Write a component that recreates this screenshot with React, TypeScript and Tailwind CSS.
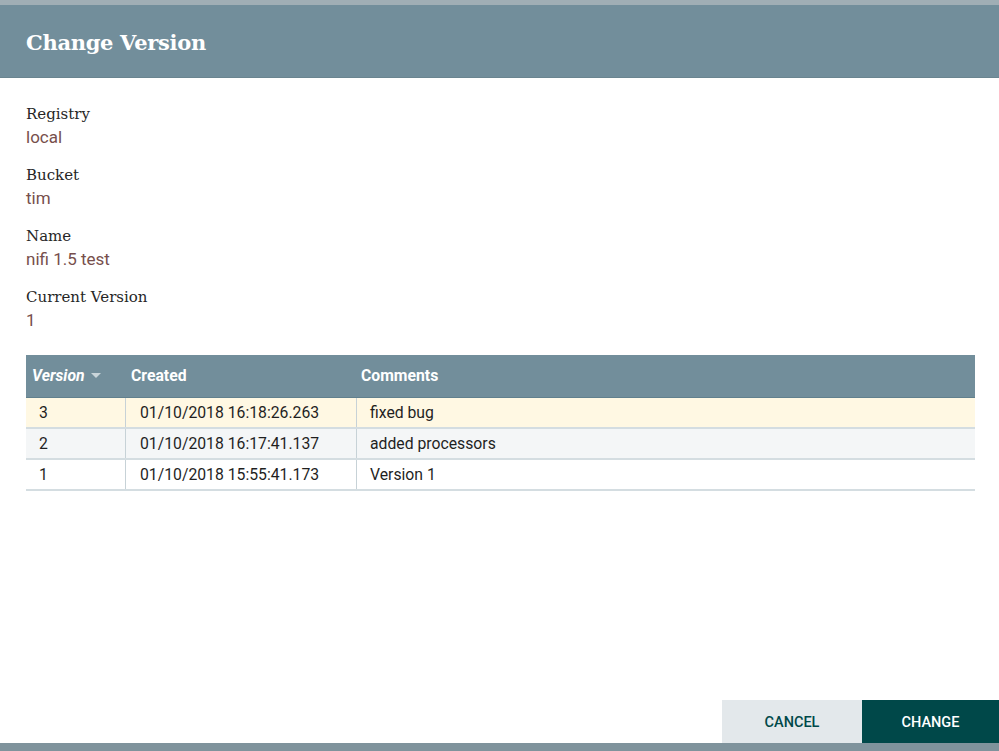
import React from 'react';

const fields = [
    { label: 'Registry', value: 'local' },
    { label: 'Bucket', value: 'tim' },
    { label: 'Name', value: 'nifi 1.5 test' },
    { label: 'Current Version', value: '1' },
];

const versions = [
    { version: '3', created: '01/10/2018 16:18:26.263', comments: 'fixed bug', rowClass: 'bg-[#fff8e3]' },
    { version: '2', created: '01/10/2018 16:17:41.137', comments: 'added processors', rowClass: 'bg-[#f4f6f7]' },
    { version: '1', created: '01/10/2018 15:55:41.173', comments: 'Version 1', rowClass: 'bg-white' },
];

const App = () => {
    return (
        <div className="w-[999px] h-[751px] flex flex-col bg-[#7f939c] overflow-hidden">
            <div className="h-[5px] bg-[#a0aeb5]" />
            <div className="flex-1 flex flex-col bg-white">
                <div className="h-[73px] bg-[#728e9b] flex items-center px-[26px] pt-[3px] border-b border-[#6a8590]">
                    <h1 className="text-white text-[21px] font-bold font-['DejaVu_Serif',serif] tracking-[-0.3px]">Change Version</h1>
                </div>

                <div className="flex-1 flex flex-col px-[26px] pt-[26px]">
                    <div className="flex flex-col gap-[16px]">
                        {fields.map((f) => (
                            <div key={f.label} className="flex flex-col">
                                <span className="text-[15px] leading-[21px] text-[#262626] font-['DejaVu_Serif',serif]">{f.label}</span>
                                <span className="text-[17px] leading-[24px] text-[#774f4c] font-['Roboto',sans-serif]">{f.value}</span>
                            </div>
                        ))}
                    </div>

                    <div className="mt-[23px] w-[949px] font-['Roboto',sans-serif] text-[15.75px]">
                        <div className="h-[43px] flex items-center bg-[#728e9b] text-white font-bold border-b border-[#61808d]">
                            <div className="w-[100px] pl-[6px] italic flex items-center gap-[6px]">
                                Version
                                <svg width="10" height="6" viewBox="0 0 10 6"><path d="M0 0h10L5 5z" fill="#c9d5da" /></svg>
                            </div>
                            <div className="w-[231px] pl-[5px]">Created</div>
                            <div className="pl-[4px]">Comments</div>
                        </div>
                        {versions.map((v) => (
                            <div key={v.version} className={'h-[31px] flex text-[#1f1f1f] border-b-2 border-[#d4dde1] ' + v.rowClass}>
                                <div className="w-[100px] pl-[13px] flex items-center border-r border-[#c7d2d7]">{v.version}</div>
                                <div className="w-[231px] pl-[14px] flex items-center border-r border-[#c7d2d7]">{v.created}</div>
                                <div className="pl-[13px] flex items-center">{v.comments}</div>
                            </div>
                        ))}
                    </div>
                </div>

                <div className="flex justify-end font-['Roboto',sans-serif] text-[14.5px] font-medium">
                    <button className="w-[140px] h-[43px] pt-[2px] bg-[#e3e8eb] text-[#004849] uppercase">Cancel</button>
                    <button className="w-[137px] h-[43px] pt-[2px] bg-[#004849] text-white uppercase">Change</button>
                </div>
            </div>
            <div className="h-[8px] bg-[#7f939c]" />
        </div>
    );
};

export default App;
